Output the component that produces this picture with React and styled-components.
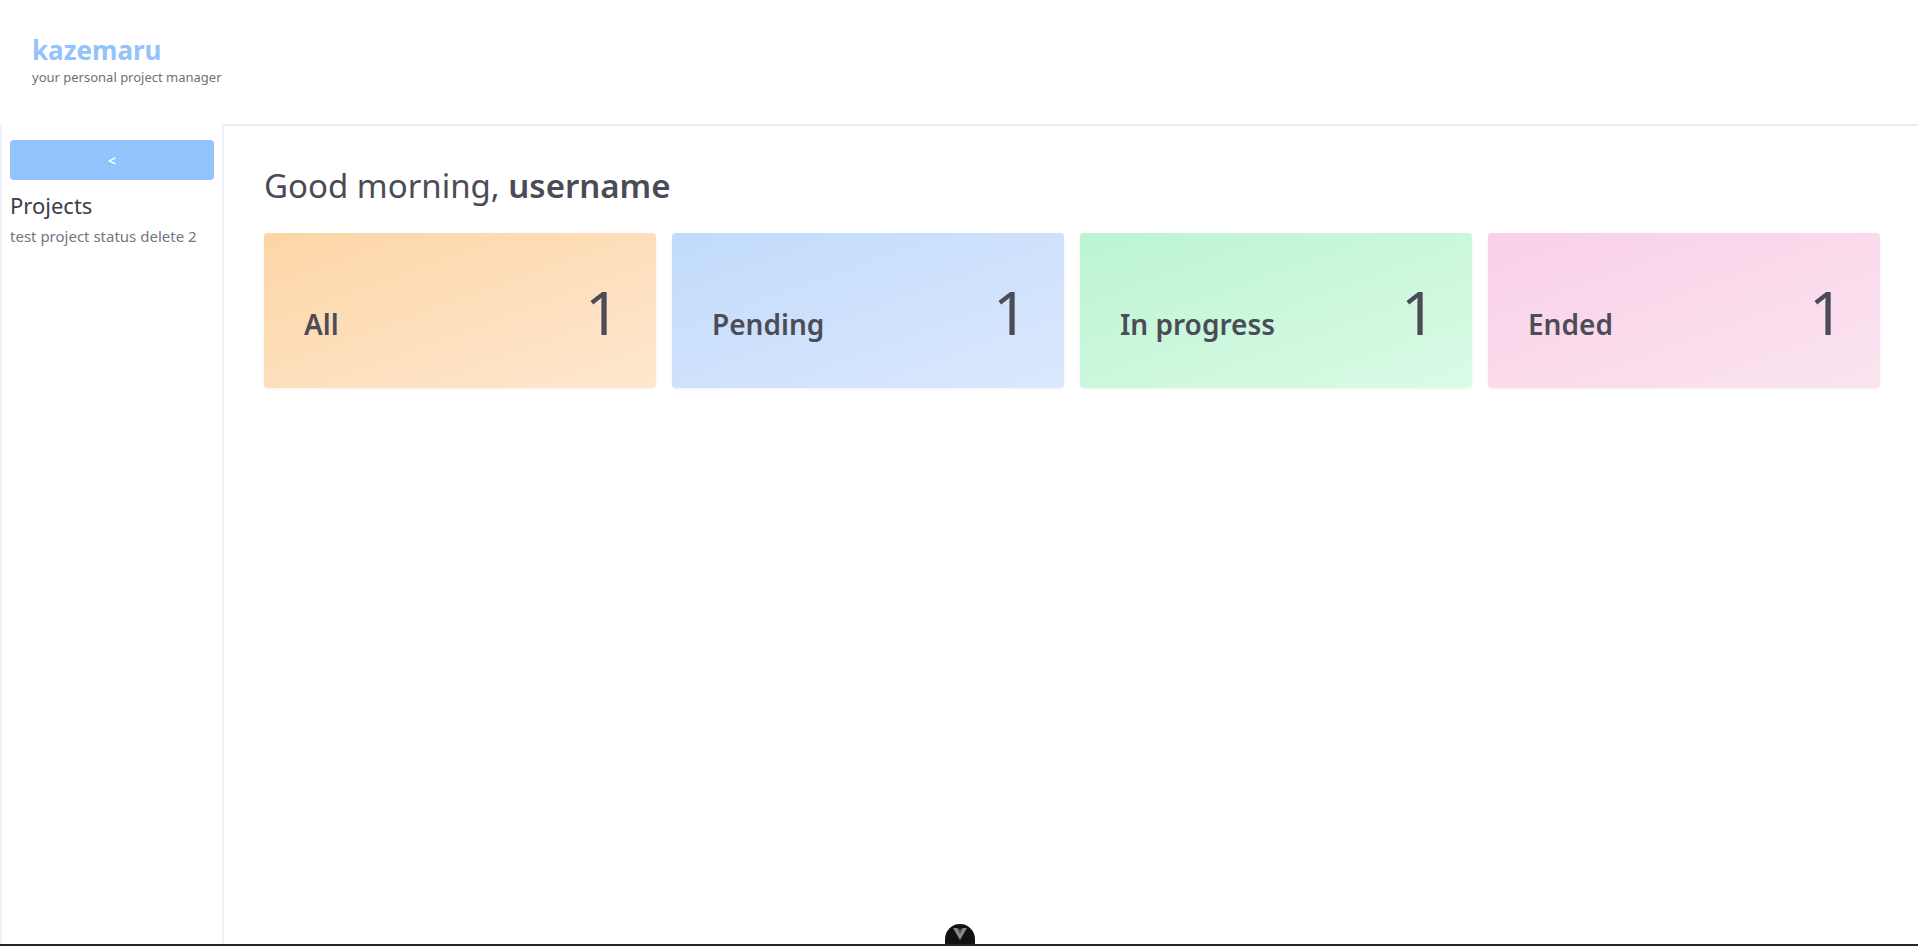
import styled, {createGlobalStyle} from 'styled-components'

const GlobalStyle = createGlobalStyle`
    html, body {
        margin: 0;
        padding: 0;
        height: 100%;
        background: #ffffff;
        font-family: "Segoe UI", "Noto Sans", "Open Sans", sans-serif;
        color: #4b4b55;
    }
    #root {
        height: 100%;
    }
`

const Layout = styled.div`
    display: flex;
    flex-direction: column;
    height: 100vh;
    position: relative;
`

const Header = styled.header`
    height: 124px;
    box-sizing: border-box;
    padding: 34px 0 0 32px;
`

const Brand = styled.h1`
    margin: 0;
    font-size: 26px;
    line-height: 32px;
    font-weight: 700;
    color: #93c3fb;
`

const Tagline = styled.p`
    margin: 3px 0 0;
    font-size: 13px;
    line-height: 16px;
    color: #6f6f78;
`

const Body = styled.div`
    flex: 1;
    display: flex;
    min-height: 0;
`

const Sidebar = styled.aside`
    width: 204px;
    border-left: 2px solid #eef3f8;
    border-right: 2px solid #eef2f6;
    padding: 16px 8px 0;
`

const CollapseButton = styled.button`
    display: block;
    width: 100%;
    height: 40px;
    border: none;
    border-radius: 4px;
    background: #91c4fc;
    color: #ffffff;
    font-family: inherit;
    font-size: 14px;
    font-weight: 600;
    cursor: pointer;
`

const SideTitle = styled.h2`
    margin: 10px 0 0;
    font-size: 22px;
    line-height: 30px;
    font-weight: 400;
    color: #3d3d45;
`

const ProjectItem = styled.div`
    margin-top: 5px;
    font-size: 15px;
    line-height: 22px;
    color: #75757d;
`

const Main = styled.main`
    flex: 1;
    border-top: 2px solid #ececec;
    padding: 37px 38px 0 40px;
`

const Greeting = styled.h1`
    margin: 0 0 24px;
    font-size: 33px;
    line-height: 46px;
    font-weight: 400;
    color: #4b4b55;

    strong {
        font-weight: 600;
    }
`

const Cards = styled.div`
    display: grid;
    grid-template-columns: repeat(4, 1fr);
    gap: 16px;
`

const gradients = {
    all: 'linear-gradient(160deg, #fdd5a6 0%, #fee8cf 100%)',
    pending: 'linear-gradient(160deg, #c1dbfb 0%, #dbe8fd 100%)',
    progress: 'linear-gradient(160deg, #bbf4d2 0%, #dbfbe6 100%)',
    ended: 'linear-gradient(160deg, #f9d0e7 0%, #fbe4f0 100%)',
}

const Card = styled.div`
    height: 155px;
    box-sizing: border-box;
    border-radius: 4px;
    background: ${({variant}) => gradients[variant]};
    box-shadow: 0 1px 3px rgba(0, 0, 0, 0.06);
    display: flex;
    align-items: baseline;
    justify-content: space-between;
    padding: 48px 36px 0 40px;
`

const CardLabel = styled.span`
    font-size: 28px;
    font-weight: 600;
    color: #4c4c57;
`

const CardCount = styled.span`
    font-size: 61px;
    line-height: 1;
    font-weight: 400;
    color: #4c4c57;
`

const BottomBar = styled.div`
    height: 2px;
    background: #1f2a30;
`

const DevtoolsTab = styled.div`
    position: absolute;
    left: 945px;
    bottom: 2px;
    width: 30px;
    height: 20px;
    border-radius: 15px 15px 0 0;
    background: #111111;
    display: flex;
    align-items: center;
    justify-content: center;
`

const stats = [
    {variant: 'all', label: 'All', count: 1},
    {variant: 'pending', label: 'Pending', count: 1},
    {variant: 'progress', label: 'In progress', count: 1},
    {variant: 'ended', label: 'Ended', count: 1},
]

function App() {
    return (
        <Layout>
            <GlobalStyle/>
            <Header>
                <Brand>kazemaru</Brand>
                <Tagline>your personal project manager</Tagline>
            </Header>
            <Body>
                <Sidebar>
                    <CollapseButton>&lt;</CollapseButton>
                    <SideTitle>Projects</SideTitle>
                    <ProjectItem>test project status delete 2</ProjectItem>
                </Sidebar>
                <Main>
                    <Greeting>Good morning, <strong>username</strong></Greeting>
                    <Cards>
                        {
                            stats.map((stat) => (
                                <Card key={stat.variant} variant={stat.variant}>
                                    <CardLabel>{stat.label}</CardLabel>
                                    <CardCount>{stat.count}</CardCount>
                                </Card>
                            ))
                        }
                    </Cards>
                </Main>
            </Body>
            <BottomBar/>
            <DevtoolsTab>
                <svg width="14" height="12" viewBox="0 0 14 12">
                    <path d="M0 0 L4 0 L7 5 L10 0 L14 0 L7 12 Z" fill="#8a8a8a"/>
                    <path d="M4 0 L7 5 L10 0 L8.5 0 L7 2.6 L5.5 0 Z" fill="#5c5c5c"/>
                </svg>
            </DevtoolsTab>
        </Layout>
    )
}

export default App
